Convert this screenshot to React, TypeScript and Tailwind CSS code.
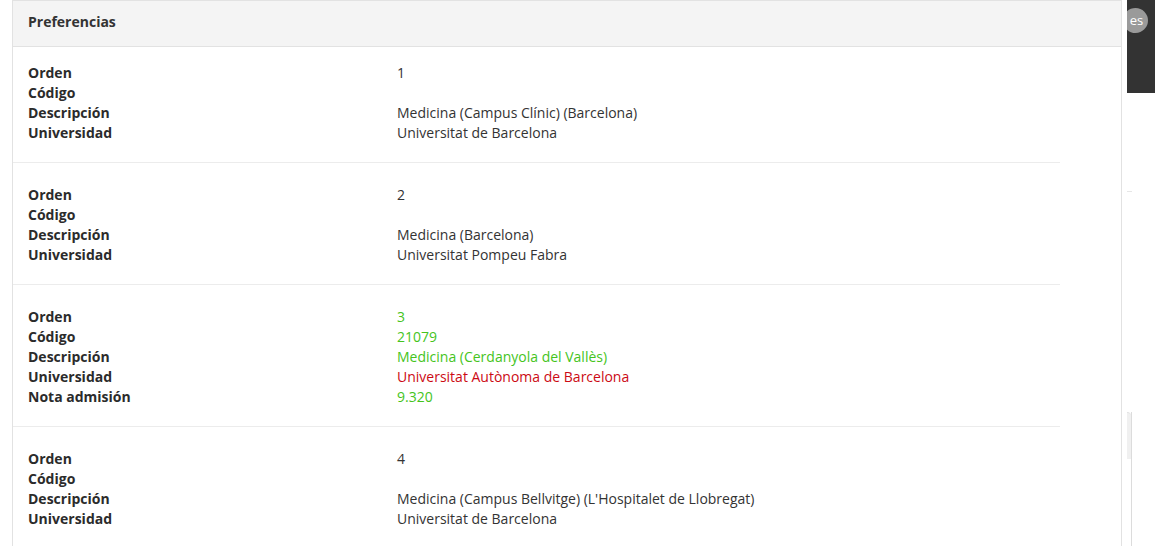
const rows = [
  {
    items: [
      { label: "Orden", value: "1" },
      { label: "Código", value: "" },
      { label: "Descripción", value: "Medicina (Campus Clínic) (Barcelona)" },
      { label: "Universidad", value: "Universitat de Barcelona" },
    ],
  },
  {
    items: [
      { label: "Orden", value: "2" },
      { label: "Código", value: "" },
      { label: "Descripción", value: "Medicina (Barcelona)" },
      { label: "Universidad", value: "Universitat Pompeu Fabra" },
    ],
  },
  {
    items: [
      { label: "Orden", value: "3", color: "text-[#45c41c]" },
      { label: "Código", value: "21079", color: "text-[#45c41c]" },
      { label: "Descripción", value: "Medicina (Cerdanyola del Vallès)", color: "text-[#45c41c]" },
      { label: "Universidad", value: "Universitat Autònoma de Barcelona", color: "text-[#cc0a14]" },
      { label: "Nota admisión", value: "9.320", color: "text-[#45c41c]" },
    ],
  },
  {
    items: [
      { label: "Orden", value: "4" },
      { label: "Código", value: "" },
      { label: "Descripción", value: "Medicina (Campus Bellvitge) (L'Hospitalet de Llobregat)" },
      { label: "Universidad", value: "Universitat de Barcelona" },
    ],
  },
];

export default function App() {
  return (
    <div className="flex h-[546px] overflow-hidden bg-white font-['Open_Sans',sans-serif] text-[14px] leading-[20px] text-[#333]">
      <div className="w-[12px] shrink-0" />

      {/* panel */}
      <div className="flex w-[1110px] shrink-0 flex-col border-x border-t border-[#e2e2e2]">
        <div className="flex h-[46px] shrink-0 items-center border-b border-[#e2e2e2] bg-[#f4f4f4] pb-[4px] pl-[15px]">
          <h2 className="font-bold text-[#333]">Preferencias</h2>
        </div>
        <div className="mr-[61px]">
          {rows.map((row, i) => (
            <div
              key={i}
              className={`border-b border-[#ececec] pb-[19px] pl-[15px] ${i === 0 ? "pt-[16px]" : "pt-[22px]"}`}
            >
              {row.items.map((it) => (
                <div key={it.label} className="flex h-[20px]">
                  <span className="w-[369px] shrink-0 font-bold text-[#2b2b2b]">{it.label}</span>
                  <span className={it.color ?? "text-[#333]"}>{it.value}</span>
                </div>
              ))}
            </div>
          ))}
        </div>
      </div>

      <div className="w-[5px] shrink-0" />

      {/* side strip */}
      <div className="flex w-[28px] shrink-0 flex-col">
        <div className="relative h-[93px] overflow-hidden bg-[#333]">
          <div className="absolute left-[-4px] top-[8px] flex h-[25px] w-[25px] items-center justify-center rounded-full bg-[#9a9a9a] text-[13px] leading-none text-white">
            <span className="pl-[2px]">es</span>
          </div>
        </div>
        <div className="mt-[98px] h-px w-[5px] bg-[#e6e6e6]" />
        <div className="mt-[220px] flex w-[5px] flex-1 flex-col border-r border-[#dcdcdc]">
          <div className="h-[47px] rounded-tr-sm border-t border-[#e2e2e2] bg-[#f0f0f0]" />
        </div>
      </div>
    </div>
  );
}
